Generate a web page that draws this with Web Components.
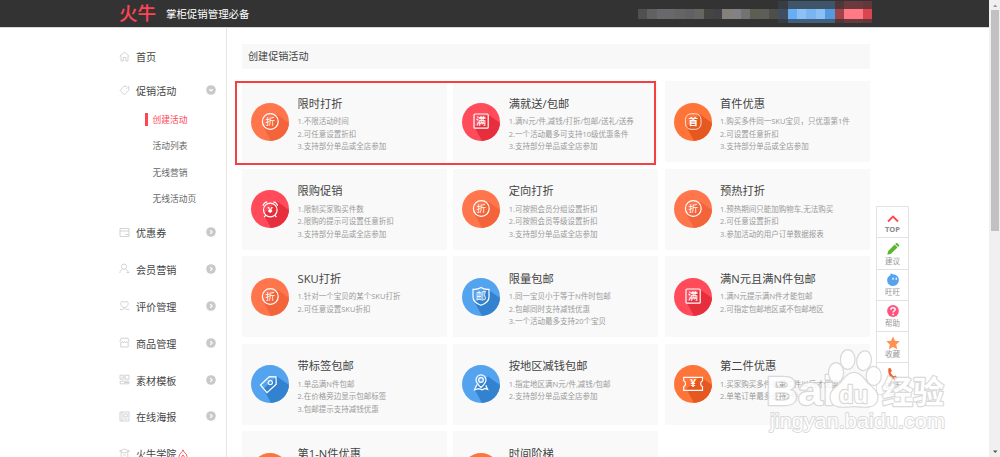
<!DOCTYPE html>
<html lang="zh-CN">
<head>
<meta charset="utf-8">
<title>火牛</title>
<style>
  html, body {
    margin: 0;
    height: 457px;
    overflow: hidden;
    background: #fff;
    font-family: "Open Sans", "Noto Sans CJK SC", sans-serif;
    color: #444;
  }
</style>
</head>
<body>
<promo-app></promo-app>

<script>
const define = (name, html) => {
  customElements.define(name, class extends HTMLElement {
    constructor() {
      super();
      this.attachShadow({ mode: 'open' });
    }

    connectedCallback() {
      this.shadowRoot.innerHTML = typeof html === 'function' ? html(this) : html;
    }
  });
};

// Censored user area, one entry per column: [top, middle, bottom]
const MOSAIC = [
  ...['#505050', '#616163', '#6a686d', '#69696c', '#656565', '#5f6163', '#666562', '#464543', '#434247',
    '#84807a', '#857f86', '#717471', '#5c5e52', '#5c5e57', '#4e4f4b'].map(c => ['#333', c, '#333']),
  ['#373d43', '#3f4f5f', '#373d43'],
  ...['#67aef5', '#8bc1f5', '#7bb5f1', '#8bc0f5', '#539ae0'].map(c => ['#3f566a', c, '#41607f']),
  ['#4f363a', '#a14449', '#4f363a'],
  ['#6a3a3e', '#ff7a84', '#673a3e'],
  ['#6a3a3e', '#ff7a84', '#673a3e'],
  ['#63373b', '#dc4450', '#63373b']
];

define('top-bar', `
  <style>
    :host { display: flex; height: 28px; box-sizing: border-box; background: #333; border-bottom: 1px solid #d8d8d8; color: #fff; padding-left: 119px; }
    .logo { width: 38px; color: #ff4455; font-weight: 500; font-size: 18.5px; line-height: 26px; white-space: nowrap; }
    .slogan { margin-left: 9px; width: 462px; font-size: 10.45px; line-height: 28px; }
    .mosaic { display: flex; margin-left: 10px; }
    .mosaic div { display: grid; width: 9.36px; grid-template-rows: 8px 10px 4px; padding-top: 1px; }
  </style>
  <div class="logo">火牛</div>
  <div class="slogan">掌柜促销管理必备</div>
  <div class="mosaic">
    ${MOSAIC.map(col => `<div>${col.map(c => `<i style="background:${c}"></i>`).join('')}</div>`).join('')}
  </div>
`);

const NAV_ICONS = {
  home: '<path d="M.7 5.4 5.5 1l4.800 4.400M2 4.700V10h2.200V6.500h2.600V10H9V4.700"/>',
  tag: '<path d="M1 5.300 5 1.300h3M9.700 3v2.500L5.400 9.900 1 5.300M7 3.900l1.500-1.400M9.700 1v2"/>',
  wallet: '<path d="M1 1.500h9v8H1zM1 4h9M6.500 7.500H10"/>',
  user: '<circle cx="5" cy="3.600" r="2.600"/><path d="M.8 10c.2-2 1-3 2.600-3.900M6.600 5.900 10 9.600M7.500 9.500H10"/>',
  badge: '<path d="M3 1.200C1 3 1.500 7 5.500 7.700 9.500 7 10 3 8 1.200L6.600 2H4.400zM.8 9.500h2.700l2-1.500 2 1.500h2.700"/>',
  shop: '<path d="M2 1.200h7l1 3c0 1.800-2.200 1.800-2.300.3 0 1.500-2.200 1.500-2.200 0 0 1.500-2.200 1.500-2.200 0C3.200 6 1 6 1 4.200zM1.800 6v4h7.400V6"/>',
  grid: '<path d="M1 1.200h3.800v4H1zM6.200 1.200H10v4H6.200zM1.200 7.200h8.600v2.600H1.200zM2.500 3.200h1.500M5 8.500h4.500"/>',
  poster: '<path d="M1 1h9v9H1zM3 1v9M4.800 3h3.400v3H4.800zM4.500 8h4"/>',
  school: '<path d="M.6 3 5.500 1l4.900 2-4.900 2zM2.200 4v5.500h6.600V4M4.200 7h2.600"/>'
};

define('nav-item', el => `
  <style>
    :host { display: flex; align-items: center; height: 36.9px; }
    .icon { width: 11px; height: 11px; margin: -2px 6px 0 0; fill: none; stroke: #c8c8c8; stroke-width: .8; }
    .label { font-size: 10.1px; line-height: 16px; white-space: nowrap; }
    .arrow { width: 10px; height: 10px; margin: -2px 10.5px 0 auto; fill: none; stroke: #fff; stroke-width: 1.2; }
    .arrow circle { fill: #c9c9c9; stroke: none; }
    .fire { width: 10px; height: 11px; margin-left: 2px; fill: none; stroke: #ff5560; }
  </style>
  <svg class="icon" viewBox="0 0 11 11">${NAV_ICONS[el.getAttribute('icon')]}</svg>
  <span class="label"><slot></slot></span>
  ${el.hasAttribute('hot') ? '<svg class="fire" viewBox="0 0 10 11"><path d="M5 .8C5 3 1 4.500 1 7.500 1 9 2 10.300 3.200 10.300 2.600 8.500 4 7.500 5 6c1 1.500 2.400 2.500 1.800 4.300C8 10.300 9 9 9 7.500 9 4.500 5 3 5 .8z"/></svg>' : ''}
  ${el.hasAttribute('arrow') ? `<svg class="arrow" viewBox="0 0 10 10"><circle cx="5" cy="5" r="4.800"/><path d="${el.getAttribute('arrow') === 'down' ? 'M3.200 4.300 5 6l1.800-1.700' : 'M4.300 3.200 6 5 4.300 6.800'}"/></svg>` : ''}
`);

define('side-nav', `
  <style>
    :host { display: block; width: 108px; height: 429px; box-sizing: border-box; padding-top: 10.7px; border-right: 1px solid #e6e6e6; overflow: hidden; }
    .open { height: 31px; }
    ul { list-style: none; margin: 0; padding: 0 0 3px 26px; color: #666; font-size: 8.75px; }
    li { display: flex; align-items: center; height: 26.25px; }
    li::before { content: ""; width: 2.5px; height: 13px; margin-right: 5px; }
    .on { color: #ff4455; }
    .on::before { background: #ff4455; }
  </style>
  <nav-item icon="home">首页</nav-item>
  <nav-item icon="tag" arrow="down" class="open">促销活动</nav-item>
  <ul>
    <li class="on">创建活动</li>
    <li>活动列表</li>
    <li>无线营销</li>
    <li>无线活动页</li>
  </ul>
  <nav-item icon="wallet" arrow="right">优惠券</nav-item>
  <nav-item icon="user" arrow="right">会员营销</nav-item>
  <nav-item icon="badge" arrow="right">评价管理</nav-item>
  <nav-item icon="shop" arrow="right">商品管理</nav-item>
  <nav-item icon="grid" arrow="right">素材模板</nav-item>
  <nav-item icon="poster" arrow="right">在线海报</nav-item>
  <nav-item icon="school" hot>火牛学院</nav-item>
`);

const COLORS = {
  coral: ['#ff764d', '#f4643a'],
  orange: ['#ff7438', '#e5581f'],
  red: ['#ff4b5a', '#e62e3d'],
  blue: ['#54a3ef', '#3382cf']
};

const GLYPHS = {
  zhe: '<circle cx="19.300" cy="18.500" r="7.900"/><text x="19.300" y="22" font-size="9.500">折</text>',
  shou: '<rect x="11.500" y="10.800" width="15.500" height="15.500" rx="5.500" stroke-width=".8"/><text x="19.300" y="22" font-size="9.500" font-weight="700">首</text>',
  man: '<rect x="12" y="11" width="14.200" height="14.200" rx="1"/><text x="19.100" y="21.700" font-size="10" font-weight="500">满</text>',
  clock: '<circle cx="19.300" cy="20" r="6.800"/><path d="M12 15.800c.5-2.200 2-3.700 4.200-4M22.400 11.800c2.200.3 3.700 1.800 4.200 4M14.800 25.200l-1.600 1.800M23.800 25.200l1.600 1.800"/><text x="19.300" y="23.300" font-size="9.500" font-weight="700">¥</text>',
  shield: '<path d="M19 9.500c2 1.500 4.800 2 8 1.800V19c0 4-3 6.500-8 8.300-5-1.800-8-4.300-8-8.300v-7.700c3.200.2 6-.3 8-1.800z"/><text x="19" y="21.800" font-size="10.500">邮</text>',
  tag: '<path d="m9.500 20 8.800-8.300 6.700.2.200 7.300-9.200 8.400z"/><circle cx="19.300" cy="17.600" r="2.100"/>',
  pin: '<path d="M19 22.500c-3.500-3.500-5-5.300-5-7.600a5 5 0 0 1 10 0c0 2.300-1.500 4.100-5 7.600zM15 19.500l-2.500 5.300 4.200-1.200 3.500 1.200 2.800-1.300 2.600 1-1.800-4.300"/><circle cx="19" cy="15" r="2.300"/>',
  ticket: '<path d="M9.700 12.300h18.800v3.500c-2.400.8-2.400 5.200 0 6v3.500H9.700v-3.500c2.400-.8 2.400-5.200 0-6z"/><text x="19.100" y="22.200" font-size="10" font-weight="700">¥</text>'
};

define('promo-icon', el => {
  const [base, shade] = COLORS[el.getAttribute('color')];
  return `
    <style>
      :host { display: block; width: 38px; height: 38px; border-radius: 50%; overflow: hidden; background: ${base}; }
      svg { display: block; fill: none; stroke: #fff; stroke-width: 1.2; }
      text { fill: #fff; stroke: none; text-anchor: middle; }
    </style>
    <svg width="38" height="38" viewBox="0 0 38 38">
      <path d="M26 11.500 38 20v18H20l-7.500-14z" fill="${shade}" stroke="none"/>
      ${GLYPHS[el.getAttribute('glyph')] || ''}
    </svg>`;
});

define('promo-card', el => `
  <style>
    :host { display: flex; box-sizing: border-box; height: 81.25px; padding-left: 9px; background: #f9f9f9; gap: 8.5px; overflow: hidden; }
    promo-icon { margin-top: 21.5px; flex: none; }
    h3 { margin: 11.6px 0 0; font-size: 11.25px; font-weight: 400; line-height: 22px; color: #444; white-space: nowrap; }
    .lines { margin-top: .6px; font-size: 7.5px; line-height: 12.5px; color: #999; white-space: nowrap; }
  </style>
  <promo-icon color="${el.getAttribute('color')}" glyph="${el.getAttribute('glyph')}"></promo-icon>
  <div>
    <h3>${el.getAttribute('heading')}</h3>
    <div class="lines">${(el.getAttribute('lines') || '').split('|').map(t => `<div>${t}</div>`).join('')}</div>
  </div>
`);

const CARDS = [
  ['coral', 'zhe', '限时打折', '1.不限活动时间|2.可任意设置折扣|3.支持部分单品或全店参加'],
  ['red', 'man', '满就送/包邮', '1.满N元/件,减钱/打折/包邮/送礼/送券|2.一个活动最多可支持10级优惠条件|3.支持部分单品或全店参加'],
  ['orange', 'shou', '首件优惠', '1.购买多件同一SKU宝贝，只优惠第1件|2.可设置任意折扣|3.支持部分单品或全店参加'],
  ['red', 'clock', '限购促销', '1.限制买家购买件数|2.限购的提示可设置任意折扣|3.支持部分单品或全店参加'],
  ['coral', 'zhe', '定向打折', '1.可按照会员分组设置折扣|2.可按照会员等级设置折扣|3.支持部分单品或全店参加'],
  ['coral', 'zhe', '预热打折', '1.预热期间只能加购物车,无法购买|2.可任意设置折扣|3.参加活动的用户订单数据报表'],
  ['coral', 'zhe', 'SKU打折', '1.针对一个宝贝的某个SKU打折|2.可任意设置SKU折扣'],
  ['blue', 'shield', '限量包邮', '1.同一宝贝小于等于N件时包邮|2.包邮同时支持减钱优惠|3.一个活动最多支持20个宝贝'],
  ['red', 'man', '满N元且满N件包邮', '1.满N元提示满N件才能包邮|2.可指定包邮地区或不包邮地区'],
  ['blue', 'tag', '带标签包邮', '1.单品满N件包邮|2.在价格旁边显示包邮标签|3.包邮提示支持减钱优惠'],
  ['blue', 'pin', '按地区减钱包邮', '1.指定地区满N元/件,减钱/包邮|2.支持部分单品或全店参加'],
  ['orange', 'ticket', '第二件优惠', '1.买家购买多件从第二件以后才优惠|2.单笔订单最多支持2件'],
  ['orange', '', '第1-N件优惠', ''],
  ['orange', '', '时间阶梯', '']
];

define('promo-board', `
  <style>
    :host { display: block; width: 627.5px; margin: 16px 0 0 15px; }
    .bar { height: 24.7px; line-height: 25px; padding-left: 6px; background: #f8f8f8; font-size: 10.1px; }
    .grid { display: grid; grid-template-columns: repeat(3, 205px); gap: 6.25px; margin-top: 12.5px; }
  </style>
  <div class="bar">创建促销活动</div>
  <div class="grid">
    ${CARDS.map(([color, glyph, heading, lines]) =>
      `<promo-card color="${color}" glyph="${glyph}" heading="${heading}" lines="${lines}"></promo-card>`).join('')}
  </div>
`);

define('tool-dock', `
  <style>
    :host { display: block; width: 33px; box-sizing: border-box; border: 1px solid #e2e2e2; border-bottom: 0; background: #fff; }
    div { display: flex; flex-direction: column; align-items: center; height: 31.25px; box-sizing: border-box; padding-top: 3.5px; border-bottom: 1px solid #e2e2e2; color: #999; font-size: 7.5px; line-height: 12px; }
    svg { width: 14px; height: 14px; flex: none; margin-bottom: -1.2px; }
    b { color: #888; font-weight: 700; }
  </style>
  <div><svg viewBox="0 0 14 14"><path d="M2 10.500 7 5.600l5 4.900" fill="none" stroke="#ff4455" stroke-width="1.800"/></svg><b>TOP</b></div>
  <div><svg viewBox="0 0 14 14"><path d="M1.300 12.700 2.200 9 8.600 2.500l2.900 2.900L5 11.800zM9.200 2l1-1c.7-.6 3.500 2 2.900 2.900l-1 1z" fill="#5cb531"/></svg>建议</div>
  <div><svg viewBox="0 0 14 14"><path d="M4.500.5c1 .1 2 .5 2.800 1 3.200-.2 5.600 2.500 5.600 5.600a5.900 5.900 0 0 1-11.800.2C1.100 5 2.400 3 4.500 2.200z" fill="#54a3ef"/><ellipse cx="7" cy="5.800" rx=".7" ry="1.200" fill="#fff"/><ellipse cx="10.200" cy="5.800" rx=".7" ry="1.200" fill="#fff"/></svg>旺旺</div>
  <div><svg viewBox="0 0 14 14"><circle cx="7" cy="7" r="5.900" fill="#ff5480"/><path d="M4.900 5.700c0-2.700 4.300-2.500 4.300-.2C9.200 7 7.100 7 7.100 8.500" fill="none" stroke="#fff" stroke-width="1.500"/><circle cx="7.100" cy="10.400" r=".9" fill="#fff"/></svg>帮助</div>
  <div><svg viewBox="0 0 14 14"><path d="m7 .4 2 4.400 4.700.5-3.500 3.200 1 4.800L7 10.900l-4.200 2.400 1-4.800L.3 5.300 5 4.800z" fill="#ff9252"/></svg>收藏</div>
  <div><svg viewBox="0 0 14 14"><path d="M2.500 1.200 4.400.9l1.500 3-1.300 1.400c.5 1.700 1.600 3 3.200 3.900l1.700-.8 2.200 2.500-1.200 1.700C5.600 12.800 1 7.500 2.500 1.200z" fill="#f0602f"/></svg>电话</div>
`);

define('water-mark', `
  <style>
    :host { display: block; pointer-events: none; }
    svg { display: block; overflow: visible; opacity: .86; }
    g { fill: #fff; stroke: #d4d4d4; stroke-width: 2.4; paint-order: stroke; stroke-linejoin: round; }
    text { font-family: "Liberation Sans", "Noto Sans CJK SC", sans-serif; }
  </style>
  <svg width="190" height="90" viewBox="762 347 190 90">
    <g>
      <text x="766" y="404.500" font-size="40" font-weight="700" textLength="69" lengthAdjust="spacingAndGlyphs">Bai</text>
      <g stroke-width="1.300">
        <ellipse cx="836" cy="372.700" rx="7" ry="9.500"/>
        <ellipse cx="847.700" cy="359.500" rx="6.700" ry="9.300"/>
        <ellipse cx="864" cy="360.700" rx="6.700" ry="9.300" transform="rotate(10 864 361)"/>
        <ellipse cx="873.700" cy="376" rx="7" ry="9"/>
        <path d="M854 373c7 0 10 7 14 11 7 6 11 9 9 16-2 8-11 7-23 6-12 1-21 2-23-6-2-7 2-10 9-16 4-4 7-11 14-11z"/>
      </g>
      <text x="839" y="402.500" font-size="24" font-weight="700" textLength="29" lengthAdjust="spacingAndGlyphs">du</text>
      <text x="882" y="402.500" font-size="31" font-weight="700">经验</text>
      <text x="770" y="428" font-size="20.500" stroke-width="1.800" textLength="175" lengthAdjust="spacingAndGlyphs">jingyan.baidu.com</text>
    </g>
  </svg>
`);

define('page-scroll', `
  <style>
    :host { display: flex; flex-direction: column; align-items: center; width: 11px; height: 457px; background: #f0f0f0; }
    i { width: 8px; height: 221px; background: #c1c1c1; margin-bottom: auto; }
    svg { width: 10px; height: 10px; }
  </style>
  <svg viewBox="0 0 10 10"><path d="M3 7h4.500L5.200 4.500z" fill="#999"/></svg>
  <i></i>
  <svg viewBox="0 0 10 10"><path d="M3 3.500h4.500L5.200 6z" fill="#505050"/></svg>
`);

define('promo-app', `
  <style>
    :host { display: flex; position: relative; height: 457px; overflow: hidden; }
    .page { width: 989px; }
    .main { display: flex; padding-left: 119px; height: 429px; overflow: hidden; }
    /* everything below floats over the page */
    .mark { position: absolute; left: 235px; top: 81px; width: 421px; height: 84px; box-sizing: border-box; border: 2px solid #f63f40; }
    tool-dock { position: absolute; left: 876px; top: 206px; }
    water-mark { position: absolute; left: 762px; top: 347px; }
  </style>
  <div class="page">
    <top-bar></top-bar>
    <div class="main">
      <side-nav></side-nav>
      <promo-board></promo-board>
    </div>
  </div>
  <page-scroll></page-scroll>
  <div class="mark"></div>
  <tool-dock></tool-dock>
  <water-mark></water-mark>
`);
</script>
</body>
</html>
